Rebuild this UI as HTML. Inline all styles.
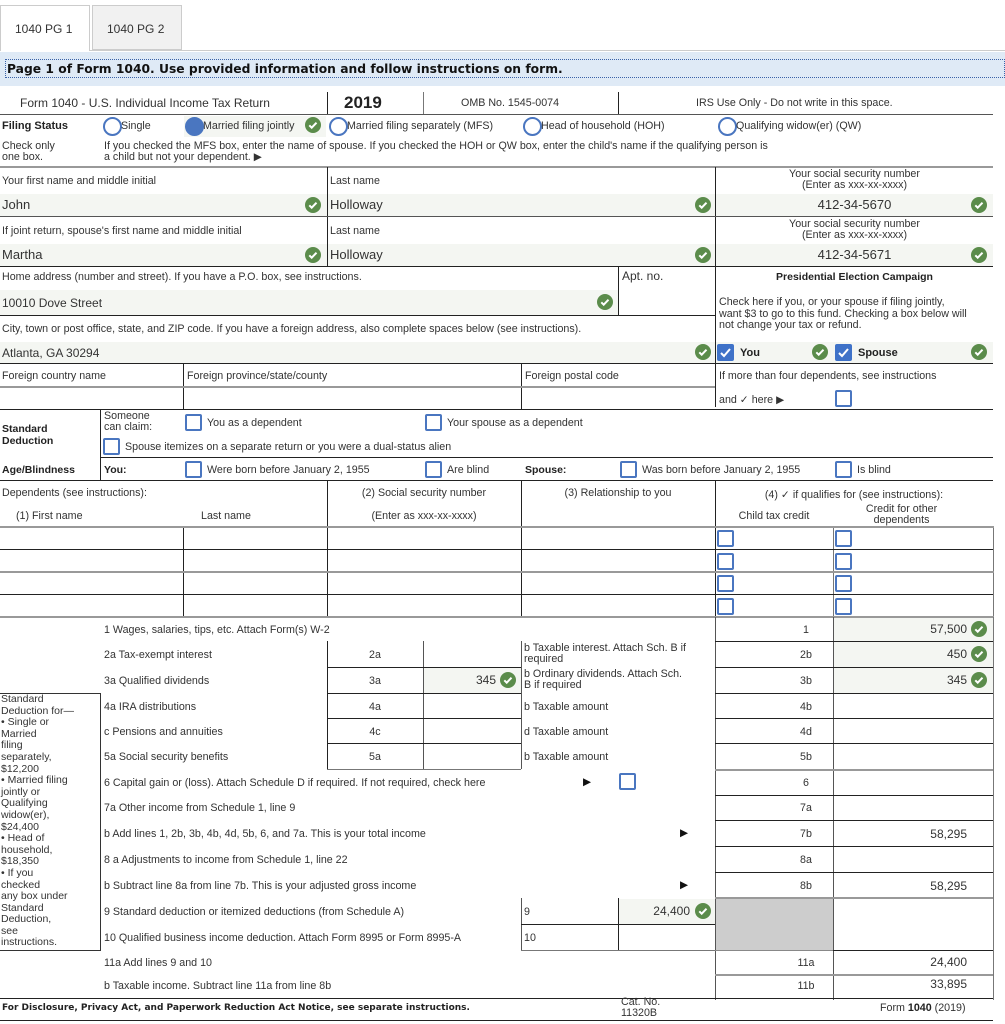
<!DOCTYPE html>
<html><head><meta charset="utf-8">
<style>
*{margin:0;padding:0;box-sizing:border-box}
body{width:1005px;height:1024px;background:#fff;position:relative;overflow:hidden;font-family:"Liberation Sans",Arial,sans-serif;color:#333;font-size:11px}
div,span,svg{position:absolute}
.t{white-space:nowrap;line-height:12px}
.b{font-family:"Liberation Sans",Arial,sans-serif;font-weight:bold;font-size:11px;color:#222}
.v{font-size:13px;color:#333;line-height:14px}
.h{height:1px;background:#222}
.hg{height:2px;background:#999}
.vl{width:1px;background:#222}
.fill{background:#f4f6f2}
.cb{width:17px;height:17px;border:2px solid #4a76c0;border-radius:2px;background:#fff}
.rd{width:19px;height:19px;border:2.5px solid #4a76c0;border-radius:50%}
.ok{width:16px;height:16px}
.r{text-align:right}
.c{text-align:center}
</style></head><body>

<!-- tabs -->
<div style="left:0;top:5px;width:90px;height:46px;border:1px solid #ccc;border-bottom:none;background:#fff"></div>
<div class="t" style="left:15px;top:23px;font-size:12px">1040 PG 1</div>
<div style="left:92px;top:5px;width:90px;height:45px;border:1px solid #ccc;background:#f1f1f1"></div>
<div class="t" style="left:107px;top:23px;font-size:12px">1040 PG 2</div>
<div style="left:90px;top:50px;width:915px;height:1px;background:#ccc"></div>

<!-- banner -->
<div style="left:0;top:52px;width:1005px;height:34px;background:#dfeaf6"></div>
<div style="left:5px;top:59px;width:1000px;height:19px;border:1px dotted #3a62a8"></div>
<div class="t" style="left:7px;top:62px;font-family:'DejaVu Sans',sans-serif;font-weight:bold;font-size:12.3px;color:#111;line-height:15px">Page 1 of Form 1040. Use provided information and follow instructions on form.</div>

<!-- header -->
<div class="t" style="left:20px;top:97px;font-size:12px">Form 1040 - U.S. Individual Income Tax Return</div>
<div class="vl" style="left:327px;top:92px;height:23px"></div>
<div class="t" style="left:344px;top:94px;font-size:17px;font-weight:bold;color:#222;line-height:18px">2019</div>
<div class="vl" style="left:423px;top:92px;height:23px;background:#777"></div>
<div class="t" style="left:461px;top:97px;font-size:10.7px">OMB No. 1545-0074</div>
<div class="vl" style="left:618px;top:92px;height:23px"></div>
<div class="t" style="left:696px;top:97px;font-size:10.7px">IRS Use Only - Do not write in this space.</div>
<div class="h" style="left:0;top:114px;width:993px;background:#555"></div>

<!-- filing status -->
<div class="t b" style="left:2px;top:120px">Filing Status</div>
<div class="rd" style="left:103px;top:117px"></div><div class="t" style="left:121px;top:120px;font-size:10.7px">Single</div>
<div class="fill" style="left:184px;top:116px;width:142px;height:21px"></div>
<div class="rd" style="left:185px;top:117px;background:#4a76c0"></div><div class="t" style="left:203px;top:120px;font-size:10.7px">Married filing jointly</div>
<svg class="ok" style="left:305px;top:117px" viewBox="0 0 16 16"><circle cx="8" cy="8" r="8" fill="#5b8c4b"/><path d="M4.3 8.3l2.4 2.4 4.8-5" stroke="#fff" stroke-width="2" fill="none"/></svg>
<div class="rd" style="left:329px;top:117px"></div><div class="t" style="left:347px;top:120px;font-size:10.7px">Married filing separately (MFS)</div>
<div class="rd" style="left:523px;top:117px"></div><div class="t" style="left:541px;top:120px;font-size:10.7px">Head of household (HOH)</div>
<div class="rd" style="left:718px;top:117px"></div><div class="t" style="left:736px;top:120px;font-size:10.7px">Qualifying widow(er) (QW)</div>
<div class="t" style="left:2px;top:141px;font-size:10.7px;line-height:11px">Check only<br>one box.</div>
<div class="t" style="left:104px;top:141px;font-size:10.7px;line-height:11px">If you checked the MFS box, enter the name of spouse. If you checked the HOH or QW box, enter the child's name if the qualifying person is<br>a child but not your dependent. ▶</div>
<div class="hg" style="left:0;top:166px;width:993px"></div>

<!-- name row -->
<div class="t" style="left:2px;top:175px;font-size:10.7px">Your first name and middle initial</div>
<div class="t" style="left:330px;top:175px;font-size:10.7px">Last name</div>
<div class="vl" style="left:327px;top:167px;height:100px"></div>
<div class="vl" style="left:715px;top:167px;height:240px"></div>
<div class="t c" style="left:716px;top:169px;width:277px;font-size:10.7px;line-height:11px">Your social security number<br>(Enter as xxx-xx-xxxx)</div>
<div class="fill" style="left:0;top:194px;width:327px;height:22px"></div>
<div class="fill" style="left:328px;top:194px;width:387px;height:22px"></div>
<div class="fill" style="left:716px;top:194px;width:277px;height:22px"></div>
<div class="t v" style="left:2px;top:198px">John</div>
<div class="t v" style="left:330px;top:198px">Holloway</div>
<div class="t v c" style="left:716px;top:198px;width:277px">412-34-5670</div>
<svg class="ok" style="left:305px;top:197px" viewBox="0 0 16 16"><circle cx="8" cy="8" r="8" fill="#5b8c4b"/><path d="M4.3 8.3l2.4 2.4 4.8-5" stroke="#fff" stroke-width="2" fill="none"/></svg>
<svg class="ok" style="left:695px;top:197px" viewBox="0 0 16 16"><circle cx="8" cy="8" r="8" fill="#5b8c4b"/><path d="M4.3 8.3l2.4 2.4 4.8-5" stroke="#fff" stroke-width="2" fill="none"/></svg>
<svg class="ok" style="left:971px;top:197px" viewBox="0 0 16 16"><circle cx="8" cy="8" r="8" fill="#5b8c4b"/><path d="M4.3 8.3l2.4 2.4 4.8-5" stroke="#fff" stroke-width="2" fill="none"/></svg>
<div class="h" style="left:0;top:216px;width:993px;background:#555"></div>

<div class="t" style="left:2px;top:225px;font-size:10.7px">If joint return, spouse's first name and middle initial</div>
<div class="t" style="left:330px;top:225px;font-size:10.7px">Last name</div>
<div class="t c" style="left:716px;top:219px;width:277px;font-size:10.7px;line-height:11px">Your social security number<br>(Enter as xxx-xx-xxxx)</div>
<div class="fill" style="left:0;top:244px;width:327px;height:22px"></div>
<div class="fill" style="left:328px;top:244px;width:387px;height:22px"></div>
<div class="fill" style="left:716px;top:244px;width:277px;height:22px"></div>
<div class="t v" style="left:2px;top:248px">Martha</div>
<div class="t v" style="left:330px;top:248px">Holloway</div>
<div class="t v c" style="left:716px;top:248px;width:277px">412-34-5671</div>
<svg class="ok" style="left:305px;top:247px" viewBox="0 0 16 16"><circle cx="8" cy="8" r="8" fill="#5b8c4b"/><path d="M4.3 8.3l2.4 2.4 4.8-5" stroke="#fff" stroke-width="2" fill="none"/></svg>
<svg class="ok" style="left:695px;top:247px" viewBox="0 0 16 16"><circle cx="8" cy="8" r="8" fill="#5b8c4b"/><path d="M4.3 8.3l2.4 2.4 4.8-5" stroke="#fff" stroke-width="2" fill="none"/></svg>
<svg class="ok" style="left:971px;top:247px" viewBox="0 0 16 16"><circle cx="8" cy="8" r="8" fill="#5b8c4b"/><path d="M4.3 8.3l2.4 2.4 4.8-5" stroke="#fff" stroke-width="2" fill="none"/></svg>
<div class="h" style="left:0;top:266px;width:993px"></div>

<!-- address -->
<div class="t" style="left:2px;top:271px;font-size:10.7px">Home address (number and street). If you have a P.O. box, see instructions.</div>
<div class="vl" style="left:618px;top:266px;height:50px"></div>
<div class="t" style="left:622px;top:270px;font-size:12px">Apt. no.</div>
<div class="fill" style="left:0;top:290px;width:618px;height:25px"></div>
<div class="t v" style="left:2px;top:296px;font-size:12px">10010 Dove Street</div>
<svg class="ok" style="left:597px;top:294px" viewBox="0 0 16 16"><circle cx="8" cy="8" r="8" fill="#5b8c4b"/><path d="M4.3 8.3l2.4 2.4 4.8-5" stroke="#fff" stroke-width="2" fill="none"/></svg>
<div class="h" style="left:0;top:315px;width:715px"></div>
<div class="t b c" style="left:716px;top:271px;width:277px;font-size:10.5px">Presidential Election Campaign</div>
<div class="t" style="left:719px;top:297px;font-size:10.7px;line-height:11.5px">Check here if you, or your spouse if filing jointly,<br>want $3 to go to this fund. Checking a box below will<br>not change your tax or refund.</div>
<div class="t" style="left:2px;top:323px;font-size:10.7px">City, town or post office, state, and ZIP code. If you have a foreign address, also complete spaces below (see instructions).</div>
<div class="fill" style="left:0;top:342px;width:715px;height:21px"></div>
<div class="fill" style="left:716px;top:342px;width:277px;height:21px"></div>
<div class="t v" style="left:2px;top:346px;font-size:12px">Atlanta, GA 30294</div>
<svg class="ok" style="left:695px;top:344px" viewBox="0 0 16 16"><circle cx="8" cy="8" r="8" fill="#5b8c4b"/><path d="M4.3 8.3l2.4 2.4 4.8-5" stroke="#fff" stroke-width="2" fill="none"/></svg>
<svg style="left:717px;top:344px;width:17px;height:17px" viewBox="0 0 17 17"><rect width="17" height="17" rx="2" fill="#3f72c8"/><path d="M4 9l3 3 6-7" stroke="#fff" stroke-width="2" fill="none"/></svg>
<div class="t b" style="left:740px;top:347px">You</div>
<svg class="ok" style="left:812px;top:344px" viewBox="0 0 16 16"><circle cx="8" cy="8" r="8" fill="#5b8c4b"/><path d="M4.3 8.3l2.4 2.4 4.8-5" stroke="#fff" stroke-width="2" fill="none"/></svg>
<svg style="left:835px;top:344px;width:17px;height:17px" viewBox="0 0 17 17"><rect width="17" height="17" rx="2" fill="#3f72c8"/><path d="M4 9l3 3 6-7" stroke="#fff" stroke-width="2" fill="none"/></svg>
<div class="t b" style="left:858px;top:347px">Spouse</div>
<svg class="ok" style="left:971px;top:344px" viewBox="0 0 16 16"><circle cx="8" cy="8" r="8" fill="#5b8c4b"/><path d="M4.3 8.3l2.4 2.4 4.8-5" stroke="#fff" stroke-width="2" fill="none"/></svg>
<div class="h" style="left:0;top:363px;width:993px"></div>

<!-- foreign -->
<div class="t" style="left:2px;top:370px;font-size:10.7px">Foreign country name</div>
<div class="vl" style="left:183px;top:363px;height:46px"></div>
<div class="t" style="left:187px;top:370px;font-size:10.7px">Foreign province/state/county</div>
<div class="vl" style="left:521px;top:363px;height:46px"></div>
<div class="t" style="left:525px;top:370px;font-size:10.7px">Foreign postal code</div>
<div class="t" style="left:719px;top:370px;font-size:10.7px">If more than four dependents, see instructions</div>
<div class="hg" style="left:0;top:386px;width:715px"></div>
<div class="t" style="left:719px;top:394px;font-size:10.7px">and ✓ here ▶</div>
<div class="cb" style="left:835px;top:390px"></div>
<div class="h" style="left:0;top:409px;width:993px"></div>

<!-- standard deduction -->
<div class="t b" style="left:2px;top:423px;font-size:10.5px;line-height:12px">Standard<br>Deduction</div>
<div class="vl" style="left:100px;top:409px;height:71px"></div>
<div class="t" style="left:104px;top:411px;font-size:10.7px;line-height:11px">Someone<br>can claim:</div>
<div class="cb" style="left:185px;top:414px"></div><div class="t" style="left:207px;top:417px;font-size:10.7px">You as a dependent</div>
<div class="cb" style="left:425px;top:414px"></div><div class="t" style="left:447px;top:417px;font-size:10.7px">Your spouse as a dependent</div>
<div class="cb" style="left:103px;top:438px"></div><div class="t" style="left:125px;top:441px;font-size:10.7px">Spouse itemizes on a separate return or you were a dual-status alien</div>
<div class="h" style="left:100px;top:457px;width:893px"></div>
<div class="t b" style="left:2px;top:464px;font-size:10.5px">Age/Blindness</div>
<div class="t b" style="left:104px;top:464px;font-size:10.5px">You:</div>
<div class="cb" style="left:185px;top:461px"></div><div class="t" style="left:207px;top:464px;font-size:10.7px">Were born before January 2, 1955</div>
<div class="cb" style="left:425px;top:461px"></div><div class="t" style="left:447px;top:464px;font-size:10.7px">Are blind</div>
<div class="t b" style="left:525px;top:464px;font-size:10.5px">Spouse:</div>
<div class="cb" style="left:620px;top:461px"></div><div class="t" style="left:642px;top:464px;font-size:10.7px">Was born before January 2, 1955</div>
<div class="cb" style="left:835px;top:461px"></div><div class="t" style="left:857px;top:464px;font-size:10.7px">Is blind</div>
<div class="h" style="left:0;top:480px;width:993px"></div>

<!-- dependents -->
<div class="t" style="left:2px;top:487px;font-size:10.7px">Dependents (see instructions):</div>
<div class="t" style="left:16px;top:510px;font-size:10.7px">(1) First name</div>
<div class="t" style="left:201px;top:510px;font-size:10.7px">Last name</div>
<div class="t c" style="left:327px;top:487px;width:194px;font-size:10.7px">(2) Social security number</div>
<div class="t c" style="left:327px;top:510px;width:194px;font-size:10.7px">(Enter as xxx-xx-xxxx)</div>
<div class="t c" style="left:521px;top:487px;width:194px;font-size:10.7px">(3) Relationship to you</div>
<div class="t c" style="left:715px;top:489px;width:278px;font-size:10.7px">(4) ✓ if qualifies for (see instructions):</div>
<div class="t c" style="left:715px;top:510px;width:118px;font-size:10.7px">Child tax credit</div>
<div class="t c" style="left:833px;top:504px;width:137px;font-size:10.7px;line-height:11px">Credit for other<br>dependents</div>
<div class="vl" style="left:327px;top:480px;height:137px"></div>
<div class="vl" style="left:521px;top:480px;height:137px"></div>
<div class="vl" style="left:715px;top:480px;height:137px"></div>
<div class="vl" style="left:183px;top:527px;height:90px"></div>
<div class="vl" style="left:833px;top:527px;height:90px;background:#777"></div>
<div class="vl" style="left:993px;top:527px;height:90px;background:#777"></div>
<div class="hg" style="left:0;top:526px;width:994px"></div>
<div class="h" style="left:0;top:549px;width:993px"></div>
<div class="hg" style="left:0;top:571px;width:994px"></div>
<div class="h" style="left:0;top:594px;width:993px"></div>
<div class="hg" style="left:0;top:616px;width:994px"></div>
<div class="cb" style="left:717px;top:530px"></div><div class="cb" style="left:835px;top:530px"></div>
<div class="cb" style="left:717px;top:553px"></div><div class="cb" style="left:835px;top:553px"></div>
<div class="cb" style="left:717px;top:575px"></div><div class="cb" style="left:835px;top:575px"></div>
<div class="cb" style="left:717px;top:598px"></div><div class="cb" style="left:835px;top:598px"></div>

<!-- income right columns -->
<div class="vl" style="left:715px;top:617px;height:383px;background:#555"></div>
<div class="vl" style="left:833px;top:617px;height:383px;background:#555"></div>
<div class="vl" style="left:993px;top:617px;height:383px;background:#777"></div>
<div class="fill" style="left:834px;top:618px;width:159px;height:75px"></div>
<div style="left:716px;top:898px;width:117px;height:52px;background:#cdcdcd"></div>
<div class="h" style="left:715px;top:641px;width:278px"></div>
<div class="h" style="left:715px;top:667px;width:278px"></div>
<div class="h" style="left:715px;top:693px;width:278px"></div>
<div class="h" style="left:715px;top:718px;width:278px"></div>
<div class="h" style="left:715px;top:743px;width:278px"></div>
<div class="hg" style="left:715px;top:769px;width:278px"></div>
<div class="h" style="left:715px;top:795px;width:278px"></div>
<div class="h" style="left:715px;top:820px;width:278px"></div>
<div class="h" style="left:715px;top:846px;width:278px"></div>
<div class="h" style="left:715px;top:872px;width:278px"></div>
<div class="hg" style="left:715px;top:897px;width:278px"></div>
<div class="h" style="left:833px;top:950px;width:160px"></div>
<div class="h" style="left:715px;top:950px;width:118px;background:#888"></div>
<div class="hg" style="left:715px;top:974px;width:278px"></div>

<div class="t c" style="left:716px;top:624px;width:180px;font-size:10.7px">1</div>
<div class="t c" style="left:716px;top:649px;width:180px;font-size:10.7px">2b</div>
<div class="t c" style="left:716px;top:675px;width:180px;font-size:10.7px">3b</div>
<div class="t c" style="left:716px;top:701px;width:180px;font-size:10.7px">4b</div>
<div class="t c" style="left:716px;top:726px;width:180px;font-size:10.7px">4d</div>
<div class="t c" style="left:716px;top:751px;width:180px;font-size:10.7px">5b</div>
<div class="t c" style="left:716px;top:777px;width:180px;font-size:10.7px">6</div>
<div class="t c" style="left:716px;top:802px;width:180px;font-size:10.7px">7a</div>
<div class="t c" style="left:716px;top:828px;width:180px;font-size:10.7px">7b</div>
<div class="t c" style="left:716px;top:854px;width:180px;font-size:10.7px">8a</div>
<div class="t c" style="left:716px;top:880px;width:180px;font-size:10.7px">8b</div>
<div class="t c" style="left:716px;top:957px;width:180px;font-size:10.7px">11a</div>
<div class="t c" style="left:716px;top:980px;width:180px;font-size:10.7px">11b</div>

<div class="t r" style="left:840px;top:623px;width:127px;font-size:12px">57,500</div>
<div class="t r" style="left:840px;top:648px;width:127px;font-size:12px">450</div>
<div class="t r" style="left:840px;top:674px;width:127px;font-size:12px">345</div>
<div class="t r" style="left:840px;top:828px;width:127px;font-size:12px">58,295</div>
<div class="t r" style="left:840px;top:880px;width:127px;font-size:12px">58,295</div>
<div class="t r" style="left:840px;top:956px;width:127px;font-size:12px">24,400</div>
<div class="t r" style="left:840px;top:978px;width:127px;font-size:12px">33,895</div>
<svg class="ok" style="left:971px;top:621px" viewBox="0 0 16 16"><circle cx="8" cy="8" r="8" fill="#5b8c4b"/><path d="M4.3 8.3l2.4 2.4 4.8-5" stroke="#fff" stroke-width="2" fill="none"/></svg>
<svg class="ok" style="left:971px;top:646px" viewBox="0 0 16 16"><circle cx="8" cy="8" r="8" fill="#5b8c4b"/><path d="M4.3 8.3l2.4 2.4 4.8-5" stroke="#fff" stroke-width="2" fill="none"/></svg>
<svg class="ok" style="left:971px;top:672px" viewBox="0 0 16 16"><circle cx="8" cy="8" r="8" fill="#5b8c4b"/><path d="M4.3 8.3l2.4 2.4 4.8-5" stroke="#fff" stroke-width="2" fill="none"/></svg>

<!-- income middle boxes -->
<div class="vl" style="left:327px;top:641px;height:128px"></div>
<div class="vl" style="left:423px;top:641px;height:128px;background:#555"></div>
<div class="vl" style="left:521px;top:641px;height:128px;background:#555"></div>
<div class="fill" style="left:424px;top:668px;width:97px;height:25px"></div>
<div class="h" style="left:327px;top:667px;width:194px"></div>
<div class="h" style="left:327px;top:693px;width:194px"></div>
<div class="h" style="left:327px;top:718px;width:194px"></div>
<div class="h" style="left:327px;top:743px;width:194px"></div>
<div class="h" style="left:327px;top:769px;width:194px;background:#777"></div>
<div class="t c" style="left:327px;top:649px;width:96px;font-size:10.7px">2a</div>
<div class="t c" style="left:327px;top:675px;width:96px;font-size:10.7px">3a</div>
<div class="t c" style="left:327px;top:701px;width:96px;font-size:10.7px">4a</div>
<div class="t c" style="left:327px;top:726px;width:96px;font-size:10.7px">4c</div>
<div class="t c" style="left:327px;top:751px;width:96px;font-size:10.7px">5a</div>
<div class="t r" style="left:424px;top:674px;width:72px;font-size:12px">345</div>
<svg class="ok" style="left:500px;top:672px" viewBox="0 0 16 16"><circle cx="8" cy="8" r="8" fill="#5b8c4b"/><path d="M4.3 8.3l2.4 2.4 4.8-5" stroke="#fff" stroke-width="2" fill="none"/></svg>
<div class="t" style="left:524px;top:643px;font-size:10.7px;line-height:11px">b Taxable interest. Attach Sch. B if<br>required</div>
<div class="t" style="left:524px;top:669px;font-size:10.7px;line-height:11px">b Ordinary dividends. Attach Sch.<br>B if required</div>
<div class="t" style="left:524px;top:701px;font-size:10.7px">b Taxable amount</div>
<div class="t" style="left:524px;top:726px;font-size:10.7px">d Taxable amount</div>
<div class="t" style="left:524px;top:751px;font-size:10.7px">b Taxable amount</div>

<!-- line 9/10 boxes -->
<div class="vl" style="left:521px;top:898px;height:52px;background:#555"></div>
<div class="vl" style="left:618px;top:898px;height:52px"></div>
<div class="fill" style="left:619px;top:899px;width:96px;height:25px"></div>
<div class="h" style="left:521px;top:924px;width:194px"></div>
<div class="h" style="left:521px;top:950px;width:194px;background:#777"></div>
<div class="t" style="left:524px;top:906px;font-size:10.7px">9</div>
<div class="t" style="left:524px;top:932px;font-size:10.7px">10</div>
<div class="t r" style="left:620px;top:905px;width:70px;font-size:12px">24,400</div>
<svg class="ok" style="left:695px;top:903px" viewBox="0 0 16 16"><circle cx="8" cy="8" r="8" fill="#5b8c4b"/><path d="M4.3 8.3l2.4 2.4 4.8-5" stroke="#fff" stroke-width="2" fill="none"/></svg>

<!-- income labels -->
<div class="t" style="left:104px;top:624px;font-size:10.7px">1 Wages, salaries, tips, etc. Attach Form(s) W-2</div>
<div class="t" style="left:104px;top:649px;font-size:10.7px">2a Tax-exempt interest</div>
<div class="t" style="left:104px;top:675px;font-size:10.7px">3a Qualified dividends</div>
<div class="t" style="left:104px;top:701px;font-size:10.7px">4a IRA distributions</div>
<div class="t" style="left:104px;top:726px;font-size:10.7px">c Pensions and annuities</div>
<div class="t" style="left:104px;top:751px;font-size:10.7px">5a Social security benefits</div>
<div class="t" style="left:104px;top:777px;font-size:10.7px">6 Capital gain or (loss). Attach Schedule D if required. If not required, check here</div>
<div class="t" style="left:583px;top:776px;font-size:10.7px;color:#111">▶</div>
<div class="cb" style="left:619px;top:773px"></div>
<div class="t" style="left:104px;top:802px;font-size:10.7px">7a Other income from Schedule 1, line 9</div>
<div class="t" style="left:104px;top:828px;font-size:10.7px">b Add lines 1, 2b, 3b, 4b, 4d, 5b, 6, and 7a. This is your total income</div>
<div class="t" style="left:680px;top:827px;font-size:10.7px;color:#111">▶</div>
<div class="t" style="left:104px;top:854px;font-size:10.7px">8 a Adjustments to income from Schedule 1, line 22</div>
<div class="t" style="left:104px;top:880px;font-size:10.7px">b Subtract line 8a from line 7b. This is your adjusted gross income</div>
<div class="t" style="left:680px;top:879px;font-size:10.7px;color:#111">▶</div>
<div class="t" style="left:104px;top:906px;font-size:10.7px">9 Standard deduction or itemized deductions (from Schedule A)</div>
<div class="t" style="left:104px;top:932px;font-size:10.7px">10 Qualified business income deduction. Attach Form 8995 or Form 8995-A</div>
<div class="t" style="left:104px;top:957px;font-size:10.7px">11a Add lines 9 and 10</div>
<div class="t" style="left:104px;top:980px;font-size:10.7px">b Taxable income. Subtract line 11a from line 8b</div>

<!-- standard deduction sidebar -->
<div style="left:0;top:693px;width:101px;height:258px;border:1px solid #333;border-left:none"></div>
<div class="t" style="left:1px;top:694px;font-size:10.5px;line-height:11.6px;white-space:normal;width:98px">Standard<br>Deduction for—<br>• Single or<br>Married<br>filing<br>separately,<br>$12,200<br>• Married filing<br>jointly or<br>Qualifying<br>widow(er),<br>$24,400<br>• Head of<br>household,<br>$18,350<br>• If you<br>checked<br>any box under<br>Standard<br>Deduction,<br>see<br>instructions.</div>

<!-- footer -->
<div class="h" style="left:0;top:998px;width:993px"></div>
<div class="t" style="left:2px;top:1002px;font-family:'DejaVu Sans',sans-serif;font-weight:bold;font-size:9px;color:#222">For Disclosure, Privacy Act, and Paperwork Reduction Act Notice, see separate instructions.</div>
<div class="t" style="left:621px;top:997px;font-size:10.7px;line-height:11px">Cat. No.<br>11320B</div>
<div class="t" style="left:880px;top:1002px;font-size:10.7px">Form <b style="color:#222">1040</b> (2019)</div>
<div class="h" style="left:0;top:1020px;width:993px"></div>

</body></html>
